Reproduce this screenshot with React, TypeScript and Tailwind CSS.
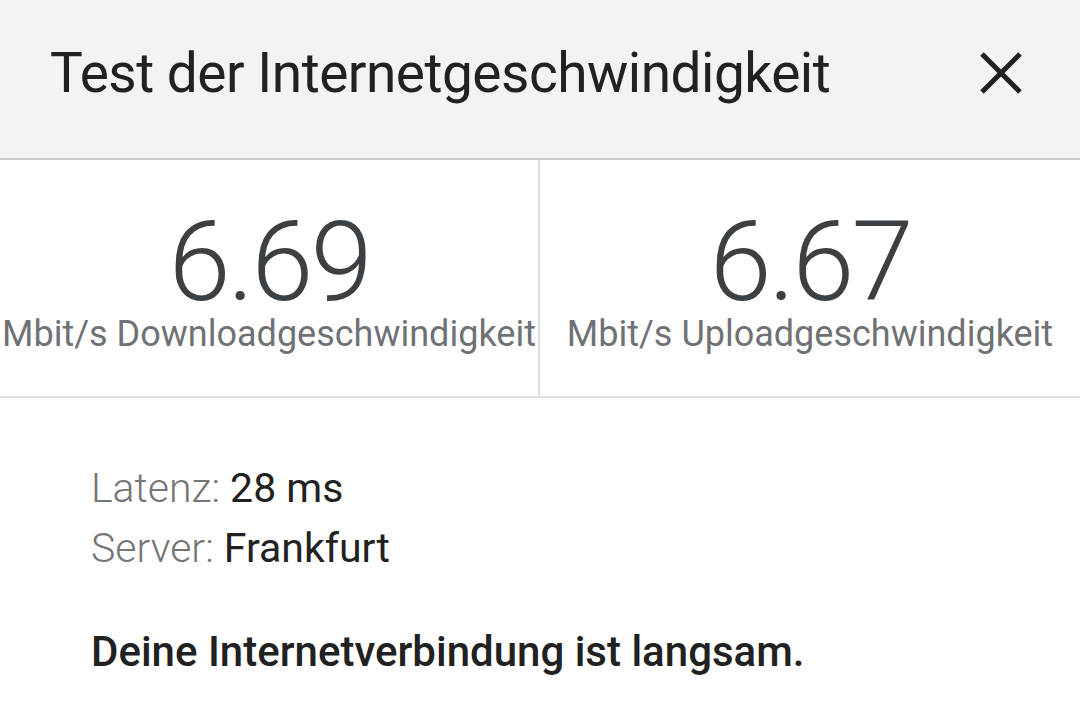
import React from "react";

export default function App() {
  return (
    <div className="w-[1080px] h-[708px] bg-white overflow-hidden" style={{ fontFamily: "Roboto, 'Noto Sans', sans-serif" }}>
      <div className="h-[160px] bg-[#f2f3f5] flex items-center justify-between pl-[50px] pr-[58px] border-b-2 border-[#c9c9cb]">
        <div className="text-[55px] leading-none text-[#202124] tracking-[-0.5px] pb-[12px]">Test der Internetgeschwindigkeit</div>
        <svg width="42" height="42" viewBox="0 0 42 42" className="mb-[12px]">
          <path d="M2 2 L40 40 M40 2 L2 40" stroke="#202124" strokeWidth="5" />
        </svg>
      </div>
      <div className="flex h-[238px] border-b-2 border-[#e0e0e0]">
        <div className="w-1/2 min-w-0 flex flex-col items-center pt-[48px] border-r-2 border-[#e0e0e0]">
          <div className="text-[112px] leading-[108px] font-light text-[#3c4043] tracking-[-3px]">6.69</div>
          <div className="text-[36px] leading-none text-[#6f7175] whitespace-nowrap">Mbit/s Downloadgeschwindigkeit</div>
        </div>
        <div className="w-1/2 min-w-0 flex flex-col items-center pt-[48px]">
          <div className="text-[112px] leading-[108px] font-light text-[#3c4043] tracking-[-3px]">6.67</div>
          <div className="text-[36px] leading-none text-[#6f7175] whitespace-nowrap">Mbit/s Uploadgeschwindigkeit</div>
        </div>
      </div>
      <div className="pl-[91px] pt-[60px]">
        <div className="text-[41px] leading-[60px]">
          <span className="font-light text-[#757575]">Latenz: </span>
          <span className="text-[#212121]">28 ms</span>
        </div>
        <div className="text-[41px] leading-[60px]">
          <span className="font-light text-[#757575]">Server: </span>
          <span className="text-[#212121]">Frankfurt</span>
        </div>
        <div className="text-[42px] leading-none font-medium text-[#212121] tracking-[0px] mt-[53px]">Deine Internetverbindung ist langsam.</div>
      </div>
    </div>
  );
}
